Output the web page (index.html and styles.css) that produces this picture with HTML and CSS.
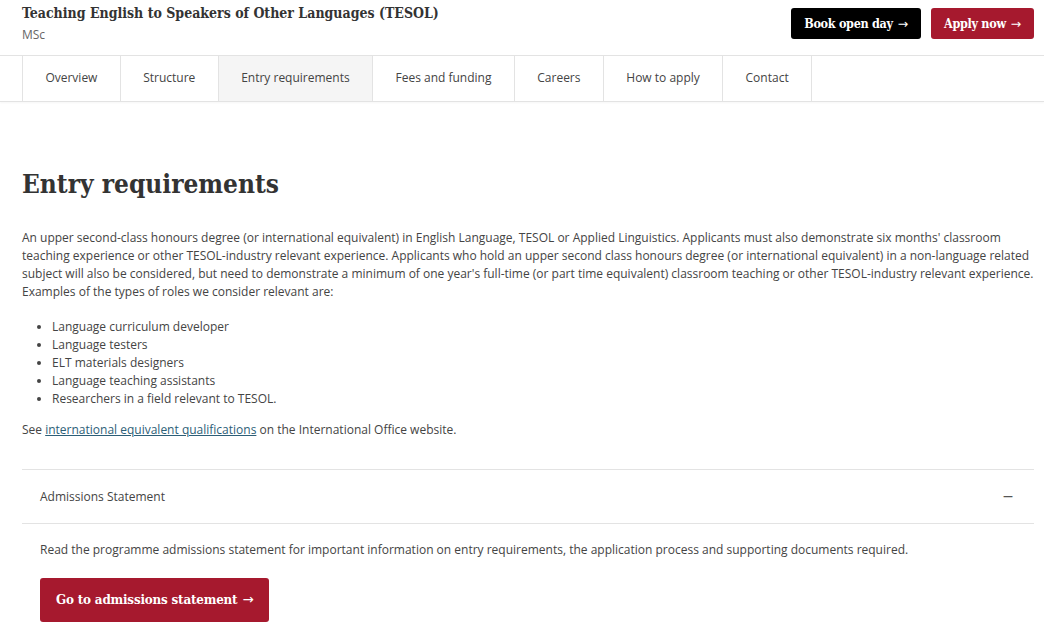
FILE: index.html
```html
<!DOCTYPE html>
<html lang="en">
<head>
<meta charset="utf-8">
<title>TESOL MSc</title>
<link rel="stylesheet" href="styles.css">
</head>
<body>
<header class="top">
  <div class="titles">
    <h1 class="course">Teaching English to Speakers of Other Languages (TESOL)</h1>
    <div class="award">MSc</div>
  </div>
  <div class="actions">
    <a class="btn btn-black" href="#">Book open day <span class="arr">→</span></a>
    <a class="btn btn-red" href="#">Apply now <span class="arr">→</span></a>
  </div>
</header>
<nav class="tabs">
  <a class="tab" href="#">Overview</a>
  <a class="tab" href="#">Structure</a>
  <a class="tab active" href="#">Entry requirements</a>
  <a class="tab" href="#">Fees and funding</a>
  <a class="tab" href="#">Careers</a>
  <a class="tab" href="#">How to apply</a>
  <a class="tab" href="#">Contact</a>
</nav>
<main class="content">
  <h2 class="heading">Entry requirements</h2>
  <p>An upper second-class honours degree (or international equivalent) in English Language, TESOL or Applied Linguistics. Applicants must also demonstrate six months' classroom teaching experience or other TESOL-industry relevant experience. Applicants who hold an upper second class honours degree (or international equivalent) in a non-language related subject will also be considered, but need to demonstrate a minimum of one year's full-time (or part time equivalent) classroom teaching or other TESOL-industry relevant experience. Examples of the types of roles we consider relevant are:</p>
  <ul class="roles">
    <li>Language curriculum developer</li>
    <li>Language testers</li>
    <li>ELT materials designers</li>
    <li>Language teaching assistants</li>
    <li>Researchers in a field relevant to TESOL.</li>
  </ul>
  <p>See <a class="link" href="#">international equivalent qualifications</a> on the International Office website.</p>
  <section class="accordion">
    <div class="acc-head">
      <span>Admissions Statement</span>
      <span class="minus">–</span>
    </div>
    <div class="acc-body">
      <p class="acc-text">Read the programme admissions statement for important information on entry requirements, the application process and supporting documents required.</p>
      <a class="btn btn-red btn-big" href="#">Go to admissions statement <span class="arr">→</span></a>
    </div>
  </section>
</main>
</body>
</html>
```
FILE: styles.css
```css
html, body {
  margin: 0;
  padding: 0;
  background: #fff;
}
body {
  font-family: "Open Sans", "Liberation Sans", sans-serif;
  font-size: 12px;
  line-height: 18px;
  color: #444;
}
.top {
  display: flex;
  justify-content: space-between;
  align-items: flex-start;
  padding: 4px 10px 0 22px;
  height: 51px;
  border-bottom: 1px solid #e3e3e3;
}
.course {
  margin: 0;
  font-family: "DejaVu Serif Condensed", "DejaVu Serif", serif;
  font-weight: bold;
  font-size: 14px;
  line-height: 18px;
  color: #333;
}
.award {
  margin-top: 4px;
  font-size: 12px;
  color: #666;
}
.actions {
  display: flex;
  gap: 10px;
  padding-top: 4px;
}
.btn {
  display: inline-flex;
  align-items: center;
  height: 31px;
  padding: 0 13px;
  border-radius: 3px;
  color: #fff;
  text-decoration: none;
  font-family: "DejaVu Serif Condensed", "DejaVu Serif", serif;
  font-weight: bold;
  font-size: 12.5px;
  letter-spacing: -0.3px;
}
.btn .arr {
  font-family: "DejaVu Sans", sans-serif;
  font-weight: normal;
  margin-left: 5px;
}
.btn-black { background: #000; }
.btn-red { background: #a6192e; }
.tabs {
  display: flex;
  padding-left: 22px;
  height: 45px;
  border-bottom: 1px solid #e3e3e3;
  box-shadow: 0 1px 2px rgba(0,0,0,0.04);
}
.tab {
  display: flex;
  align-items: center;
  padding: 0 22.4px 2px;
  border-left: 1px solid #e3e3e3;
  color: #444;
  text-decoration: none;
}
.tab:last-child { border-right: 1px solid #e3e3e3; }
.tab.active { background: #f5f5f5; }
.content {
  padding: 67px 10px 0 22px;
}
.heading {
  margin: 0 0 30px;
  font-family: "DejaVu Serif Condensed", "DejaVu Serif", serif;
  font-weight: bold;
  font-size: 26px;
  line-height: 30px;
  color: #333;
}
.content p {
  margin: 0 0 17px;
}
.roles {
  margin: 0 0 13px;
  padding-left: 30px;
}
.link {
  color: #2c5e77;
  text-decoration: underline;
}
.accordion {
  margin-top: 30px;
  border-top: 1px solid #e3e3e3;
}
.acc-head {
  display: flex;
  justify-content: space-between;
  align-items: center;
  height: 53px;
  padding: 0 18px;
  border-bottom: 1px solid #e3e3e3;
}
.minus {
  color: #555;
  font-size: 15px;
  line-height: 15px;
  padding: 0 4px 3px 0;
  transform: scaleX(1.4);
}
.acc-body {
  padding: 17px 18px 0;
}
.content .acc-text {
  margin: 0 0 19px;
}
.btn-big {
  height: 44px;
  padding: 0 16px;
  font-size: 13.3px;
  letter-spacing: -0.2px;
}
```
